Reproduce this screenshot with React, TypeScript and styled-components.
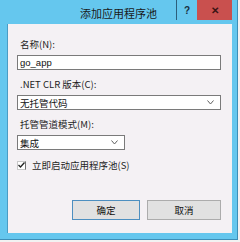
import * as React from 'react';
import styled, {createGlobalStyle} from 'styled-components';

const GlobalStyle = createGlobalStyle`
  html, body {
    margin: 0;
    padding: 0;
    background: #f2f2f2;
  }
  body {
    font-family: "Noto Sans CJK SC", "Liberation Sans", sans-serif;
  }
`;

const Window = styled.div`
  width: 238px;
  height: 240px;
  box-sizing: border-box;
  background: #65c7ee;
  border-right: 1px solid #3d8fb8;
  border-bottom: 1px solid #3d8fb8;
  display: flex;
  flex-direction: column;
  padding: 0 5px 6px 7px;
`;

const TitleBar = styled.div`
  height: 24px;
  display: flex;
  align-items: flex-start;
  flex-shrink: 0;
`;

const Title = styled.div`
  flex: 1;
  padding-left: 54px;
  text-align: center;
  font-size: 11px;
  line-height: 26px;
  color: #1a1a1a;
`;

const CaptionButton = styled.div<{ $close?: boolean }>`
  width: ${p => (p.$close ? 35 : 21)}px;
  height: 20px;
  display: flex;
  align-items: center;
  justify-content: center;
  box-sizing: border-box;
  background: ${p => (p.$close ? '#c9504e' : 'transparent')};
  border-left: ${p => (p.$close ? 'none' : '1px solid #2c5f7c')};
  color: ${p => (p.$close ? '#3a1414' : '#173040')};
  font-family: "Liberation Sans", sans-serif;
  font-weight: bold;
  font-size: 10px;
`;

const Content = styled.div`
  flex: 1;
  background: #f4f1f4;
  border-left: 1px solid #4a9cc4;
  padding: 14px 11px 0 9px;
  display: flex;
  flex-direction: column;
`;

const Field = styled.div`
  display: flex;
  flex-direction: column;
  margin-bottom: 8px;
`;

const Label = styled.div`
  font-size: 9.5px;
  line-height: 12px;
  height: 12px;
  color: #1e1e1e;
  padding-left: 3px;
  margin-bottom: 5px;
`;

const Box = styled.div<{ $width?: number }>`
  height: 15px;
  width: ${p => (p.$width ? `${p.$width}px` : 'auto')};
  box-sizing: border-box;
  border: 1px solid #7a7a7a;
  background: #ffffff;
  display: flex;
  align-items: center;
  padding: 0 6px 0 2px;
  font-size: 9.5px;
  color: #111;
`;

const BoxText = styled.span`
  flex: 1;
  font-family: "Liberation Sans", "Noto Sans CJK SC", sans-serif;
`;

const Chevron = styled.svg`
  width: 7px;
  height: 5px;
`;

const CheckRow = styled.div`
  display: flex;
  align-items: center;
  gap: 6px;
  height: 12px;
  margin-top: 1px;
  font-size: 9.5px;
  color: #1e1e1e;
`;

const CheckBox = styled.div`
  width: 9px;
  height: 9px;
  box-sizing: border-box;
  border: 1px solid #c8c8c8;
  border-right-color: #707070;
  background: #fff;
  display: flex;
  align-items: center;
  justify-content: center;
`;

const Buttons = styled.div`
  display: flex;
  justify-content: flex-end;
  gap: 7px;
  margin-top: 29px;
`;

const Button = styled.div<{ $primary?: boolean; $width: number }>`
  width: ${p => p.$width}px;
  height: 20px;
  box-sizing: border-box;
  border: 1px solid ${p => (p.$primary ? '#4d8fc0' : '#acacac')};
  background: #e1e1e1;
  display: flex;
  align-items: center;
  justify-content: center;
  font-size: 9.5px;
  color: #111;
`;

const Select = ({value, width}: {value: string; width?: number}) => (
  <Box $width={width}>
    <BoxText>{value}</BoxText>
    <Chevron viewBox="0 0 7 5">
      <path d="M0.5 0.5 L3.5 4 L6.5 0.5" fill="none" stroke="#606060" strokeWidth="1"/>
    </Chevron>
  </Box>
);

const App = () => (
  <>
    <GlobalStyle/>
    <Window>
      <TitleBar>
        <Title>添加应用程序池</Title>
        <CaptionButton>?</CaptionButton>
        <CaptionButton $close>✕</CaptionButton>
      </TitleBar>
      <Content>
        <Field>
          <Label>名称(N):</Label>
          <Box><BoxText>go_app</BoxText></Box>
        </Field>
        <Field>
          <Label>.NET CLR 版本(C):</Label>
          <Select value="无托管代码"/>
        </Field>
        <Field>
          <Label>托管管道模式(M):</Label>
          <Select value="集成" width={108}/>
        </Field>
        <CheckRow>
          <CheckBox>
            <svg width="7" height="6" viewBox="0 0 7 6">
              <path d="M0.5 3 L2.5 5 L6.5 0.5" fill="none" stroke="#222" strokeWidth="1.3"/>
            </svg>
          </CheckBox>
          立即启动应用程序池(S)
        </CheckRow>
        <Buttons>
          <Button $primary $width={68}>确定</Button>
          <Button $width={74}>取消</Button>
        </Buttons>
      </Content>
    </Window>
  </>
);

export default App;
